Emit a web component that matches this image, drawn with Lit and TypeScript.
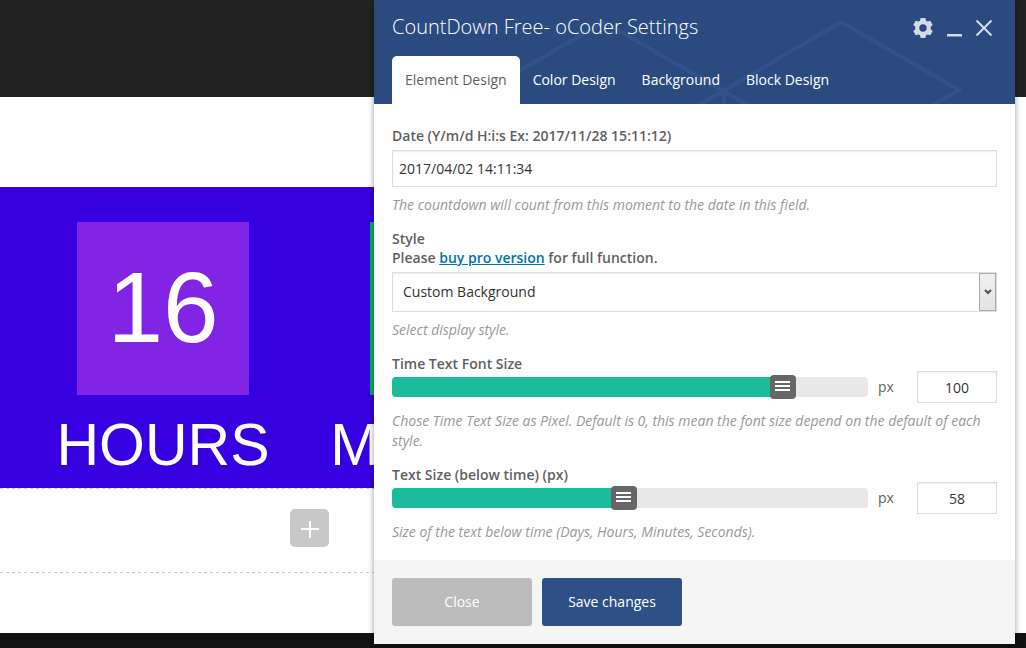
import { LitElement, html, css, svg } from "lit";
import { customElement, property, state } from "lit/decorators.js";

@customElement("count-down")
class CountDown extends LitElement {
  static styles = css`
    :host {
      display: block;
      background: #3600e0;
      color: #fff;
      font-family: "Liberation Sans", Arial, sans-serif;
      overflow: hidden;
    }
    .units {
      display: flex;
      margin-left: 13px;
      padding: 35px 0 9px;
    }
    .unit {
      flex: 0 0 300px;
      display: flex;
      flex-direction: column;
      align-items: center;
      gap: 16px;
    }
    .value {
      box-sizing: border-box;
      display: flex;
      align-items: center;
      justify-content: center;
      width: 172px;
      height: 173px;
      padding-bottom: 4px;
      font-size: 100px;
      line-height: 100px;
      background: #8224e3;
    }
    .minutes .value {
      width: 186px;
      background: #00b259;
    }
    .name {
      font-size: 59px;
      line-height: 68px;
    }
  `;
  render() {
    return html`
      <div class="units">
        <div class="unit"><div class="value">16</div><div class="name">HOURS</div></div>
        <div class="unit minutes"><div class="value"></div><div class="name">MINUTES</div></div>
      </div>
    `;
  }
}

@customElement("px-slider")
class PxSlider extends LitElement {
  @property() label = "";
  @property({ type: Number }) value = 0;
  @property({ type: Number }) max = 119;

  static styles = css`
    :host {
      display: flex;
      align-items: flex-end;
      color: #5f5f5f;
    }
    .main {
      flex: 1;
      display: flex;
      flex-direction: column;
      gap: 4px;
      padding-bottom: 6px;
    }
    label {
      font-weight: 600;
      line-height: 19px;
    }
    .range {
      appearance: none;
      display: block;
      width: 100%;
      height: 20px;
      margin: 0;
      border-radius: 4px;
      background: linear-gradient(to right, #1cbb9b var(--fill), #e8e8e8 var(--fill));
    }
    .range::-webkit-slider-thumb {
      appearance: none;
      width: 26px;
      height: 24px;
      border-radius: 4px;
      background:
        linear-gradient(#fff, #fff) 5px 6px / 15px 2px no-repeat,
        linear-gradient(#fff, #fff) 5px 10px / 15px 2px no-repeat,
        linear-gradient(#fff, #fff) 5px 14px / 15px 2px no-repeat,
        #666;
    }
    .unit {
      width: 39px;
      padding: 0 0 6px 10px;
      line-height: 20px;
    }
    .number {
      box-sizing: border-box;
      width: 80px;
      height: 32px;
      padding: 0;
      border: 1px solid #ddd;
      box-shadow: inset 0 1px 2px rgba(0, 0, 0, 0.07);
      font: inherit;
      color: #333;
      text-align: center;
    }
  `;
  private update_(e: Event) {
    this.value = Number((e.target as HTMLInputElement).value) || 0;
  }
  render() {
    return html`
      <div class="main">
        <label for="range">${this.label}</label>
        <input id="range" class="range" type="range" min="0" max=${this.max} .value=${String(this.value)}
          style="--fill:${(this.value / this.max) * 100}%" @input=${this.update_} />
      </div>
      <span class="unit">px</span>
      <input class="number" type="text" aria-label="${this.label} value" .value=${String(this.value)} @change=${this.update_} />
    `;
  }
}

@customElement("settings-panel")
class SettingsPanel extends LitElement {
  @state() private tab = 0;
  private tabs = ["Element Design", "Color Design", "Background", "Block Design"];

  static styles = css`
    :host {
      display: block;
      font: 14px/20px "Open Sans", sans-serif;
      color: #5f5f5f;
      background: #fff;
      box-shadow: 0 0 6px rgba(0, 0, 0, 0.4);
    }
    header {
      position: relative;
      overflow: hidden;
      background: #2b4b80;
      color: #fff;
      padding: 0 18px;
    }
    .pattern {
      position: absolute;
      top: 0;
      right: 0;
      width: 641px;
      height: 104px;
    }
    .bar {
      position: relative;
      display: flex;
      align-items: center;
      height: 56px;
    }
    h1 {
      flex: 1;
      margin: 0;
      font-size: 20px;
      line-height: 54px;
      font-weight: 300;
      align-self: flex-start;
    }
    .actions {
      display: flex;
      gap: 10px;
      padding-right: 2px;
    }
    .action {
      display: block;
      width: 21px;
      height: 20px;
      padding: 0;
      border: 0;
      background: none;
      color: #d5dbe6;
    }
    .action svg {
      display: block;
      width: 21px;
      height: 20px;
    }
    .tabs {
      position: relative;
      display: flex;
    }
    .tab {
      height: 48px;
      padding: 0 13px;
      border: 0;
      border-radius: 5px 5px 0 0;
      background: none;
      color: #fff;
      font: inherit;
    }
    .tab.active {
      background: #fff;
      color: #5f5f5f;
    }
    .body {
      display: flex;
      flex-direction: column;
      gap: 14px;
      padding: 22px 18px 18px;
    }
    .label {
      display: block;
      margin-bottom: 5px;
      font-weight: 600;
      line-height: 19px;
    }
    .label a {
      color: #0073aa;
    }
    .text,
    .select {
      box-sizing: border-box;
      width: 100%;
      border: 1px solid #ddd;
      border-radius: 0;
      background: #fff;
      box-shadow: inset 0 1px 2px rgba(0, 0, 0, 0.07);
      color: #333;
      font: inherit;
    }
    .text {
      display: block;
      height: 37px;
      padding: 0 6px;
    }
    .select-box {
      display: grid;
    }
    .select {
      grid-area: 1 / 1;
      appearance: none;
      height: 40px;
      padding: 0 28px 0 10px;
    }
    .drop {
      grid-area: 1 / 1;
      justify-self: end;
      box-sizing: border-box;
      width: 17px;
      margin: 1px;
      display: grid;
      place-items: center;
      border: 1px solid #a9a9a9;
      background: linear-gradient(#f0f0f0, #e3e3e3);
      pointer-events: none;
    }
    .hint {
      margin: 8px 0 0;
      font-style: italic;
      color: #999;
    }
    footer {
      display: flex;
      gap: 10px;
      padding: 18px;
      background: #f5f5f5;
    }
    .button {
      width: 140px;
      height: 48px;
      padding: 0;
      border: 0;
      border-radius: 3px;
      background: #bcbcbc;
      color: #fff;
      font: inherit;
    }
    .button.primary {
      background: #2e5086;
    }
  `;

  private gear() {
    return svg`<path fill="currentColor" fill-rule="evenodd" d="M7.600 0h4.800l.6 2.700 1.600.9 2.700-.9 2.400 4.200-2 1.900v2.400l2 1.900-2.400 4.200-2.700-.9-1.600.9-.6 2.700H7.600L7 17.300l-1.600-.9-2.700.9L.3 13.100l2-1.900V8.800l-2-1.900 2.400-4.200 2.700.9L7 2.700zM10 6.300a3.700 3.700 0 1 0 0 7.400 3.700 3.700 0 0 0 0-7.400z"/>`;
  }

  render() {
    return html`
      <header>
        <svg class="pattern" viewBox="0 0 641 104" fill="none" stroke="#325289" stroke-width="4" aria-hidden="true">
          <path d="M112 90L230 22L349 91L467 22L585 90L467 159L349 91L230 159ZM350 91V130" />
        </svg>
        <div class="bar">
          <h1>CountDown Free- oCoder Settings</h1>
          <div class="actions">
            <button class="action" aria-label="Options"><svg viewBox="-1 0 21 20">${this.gear()}</svg></button>
            <button class="action" aria-label="Minimize"><svg viewBox="-1 0 21 20"><path fill="currentColor" d="M3 16h15v2.500H3z" /></svg></button>
            <button class="action" aria-label="Close panel"><svg viewBox="0 0 21 20"><path fill="none" stroke="currentColor" stroke-width="2" d="M2.500 2.500l15 15M17.500 2.500l-15 15" /></svg></button>
          </div>
        </div>
        <div class="tabs" role="tablist">
          ${this.tabs.map(
            (name, i) => html`<button class="tab ${i === this.tab ? "active" : ""}" role="tab"
              aria-selected=${i === this.tab} @click=${() => (this.tab = i)}>${name}</button>`
          )}
        </div>
      </header>
      <div class="body">
        <div>
          <label class="label" for="date">Date (Y/m/d H:i:s Ex: 2017/11/28 15:11:12)</label>
          <input class="text" id="date" type="text" value="2017/04/02 14:11:34" />
          <p class="hint">The countdown will count from this moment to the date in this field.</p>
        </div>
        <div>
          <label class="label" for="style">Style<br />Please <a href="#pro">buy pro version</a> for full function.</label>
          <div class="select-box">
            <select class="select" id="style"><option>Custom Background</option></select>
            <span class="drop"><svg width="8" height="6" viewBox="0 0 8 6"><path d="M1 1l3 3 3-3" fill="none" stroke="#505050" stroke-width="2" /></svg></span>
          </div>
          <p class="hint">Select display style.</p>
        </div>
        <div>
          <px-slider label="Time Text Font Size" value="100"></px-slider>
          <p class="hint">Chose Time Text Size as Pixel. Default is 0, this mean the font size depend on the default of each style.</p>
        </div>
        <div>
          <px-slider label="Text Size (below time) (px)" value="58"></px-slider>
          <p class="hint">Size of the text below time (Days, Hours, Minutes, Seconds).</p>
        </div>
      </div>
      <footer>
        <button class="button">Close</button>
        <button class="button primary">Save changes</button>
      </footer>
    `;
  }
}

@customElement("app-root")
class AppRoot extends LitElement {
  static styles = css`
    :host {
      position: relative;
      display: flex;
      flex-direction: column;
      min-height: 100vh;
      overflow: hidden;
      background: #fff;
    }
    .top {
      height: 97px;
      background: #222;
    }
    .content {
      flex: 1;
      padding: 90px 0 60px;
    }
    .column {
      width: 38%;
    }
    .add-row {
      --dash: repeating-linear-gradient(to right, #ccc 0 3px, transparent 3px 6px);
      display: flex;
      padding: 21px 0 26px 290px;
      background: var(--dash) top / 100% 1px no-repeat, var(--dash) bottom / 100% 1px no-repeat;
    }
    .add {
      display: grid;
      place-items: center;
      width: 39px;
      height: 38px;
      padding: 2px 0 0;
      border: 0;
      border-radius: 5px;
      background: #c8c8c8;
    }
    .bottom {
      height: 15px;
      background: #111;
    }
    .panel {
      position: absolute;
      top: 0;
      right: 11px;
      width: 641px;
      max-width: calc(100% - 11px);
    }
  `;
  render() {
    return html`
      <div class="top"></div>
      <main class="content">
        <div class="column">
          <count-down></count-down>
          <div class="add-row">
            <button class="add" aria-label="Add element">
              <svg width="18" height="18" viewBox="0 0 18 18"><path d="M9 1v17M0 9h18" stroke="#fff" stroke-width="2" /></svg>
            </button>
          </div>
        </div>
      </main>
      <div class="bottom"></div>
      <settings-panel class="panel"></settings-panel>
    `;
  }
}
